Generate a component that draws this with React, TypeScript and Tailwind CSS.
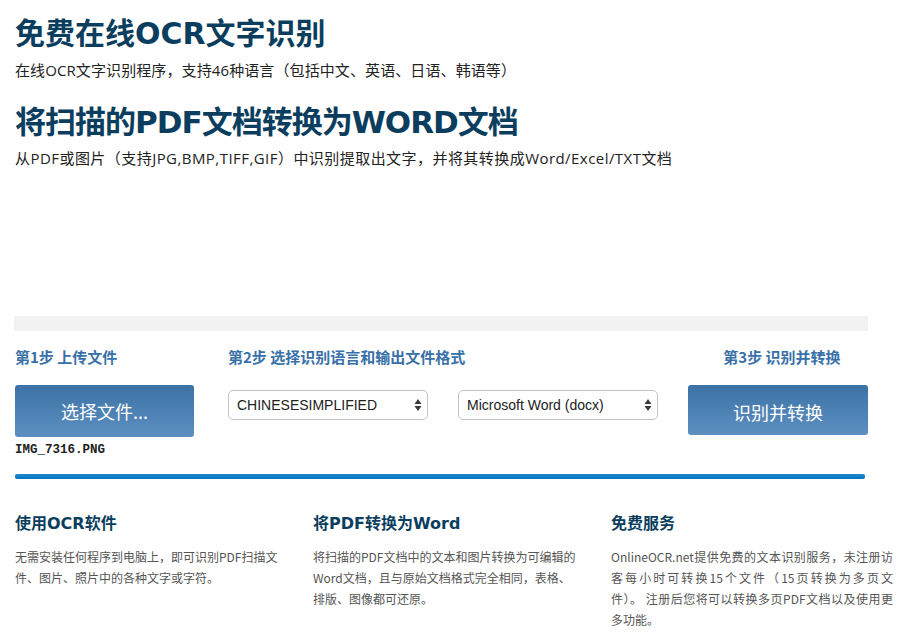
import React from "react";

const titleFont = { fontFamily: '"DejaVu Sans", "Noto Sans CJK SC", sans-serif' };

function UpDown() {
  return (
    <svg width="8" height="14" viewBox="0 0 8 14" className="shrink-0">
      <path d="M4 1 L7.5 6 L0.5 6 Z" fill="#3a3a3a" />
      <path d="M4 13 L7.5 8 L0.5 8 Z" fill="#3a3a3a" />
    </svg>
  );
}

function FakeSelect({ label }: { label: string }) {
  return (
    <div className="w-[200px] h-[30px] mt-[5px] rounded-[5px] border border-[#c4c4c4] bg-white flex items-center justify-between pl-[8px] pr-[5px] text-[14px] text-[#222] font-['Liberation_Sans',sans-serif]">
      <span>{label}</span>
      <UpDown />
    </div>
  );
}

const line = "block [text-align-last:justify]";

export default function App() {
  return (
    <div className="w-[910px] min-h-[643px] bg-white font-['Open_Sans','Noto_Sans_CJK_SC',sans-serif]">
      <div className="pl-[15px] pr-[42px] pt-[16px]">
        <h1 style={titleFont} className="text-[30px] leading-[36px] font-bold text-[#0b3e5e]">
          免费在线OCR文字识别
        </h1>
        <p className="mt-[8px] text-[15px] leading-[20px] text-[#222] tracking-[0.1px]">
          在线OCR文字识别程序，支持46种语言（包括中文、英语、日语、韩语等）
        </p>
        <h2 style={titleFont} className="mt-[22px] text-[31px] leading-[40px] font-bold text-[#0b3e5e] tracking-[-1px]">
          将扫描的PDF文档转换为WORD文档
        </h2>
        <p className="mt-[6px] text-[15px] leading-[20px] text-[#222] tracking-[0.45px]">
          从PDF或图片（支持JPG,BMP,TIFF,GIF）中识别提取出文字，并将其转换成Word/Excel/TXT文档
        </p>

        <div className="h-[148px]" />

        <div className="-ml-px w-[854px] h-[15px] bg-[#f2f2f2]" />

        <div className="mt-[16px] flex items-start">
          <div className="w-[180px]">
            <div className="text-[15px] leading-[20px] font-bold text-[#3870a8] font-['Noto_Sans_CJK_SC',sans-serif]">
              第1步 上传文件
            </div>
            <button className="mt-[18px] w-[179px] h-[52px] rounded-[3px] bg-gradient-to-b from-[#3c72a6] to-[#5d90c1] text-white text-[18px] font-['Noto_Sans_CJK_SC',sans-serif] flex items-center justify-center">
              选择文件...
            </button>
            <div className="mt-[5px] text-[12.5px] leading-[16px] font-bold text-[#222] font-['Liberation_Mono',monospace]">
              IMG_7316.PNG
            </div>
          </div>

          <div className="ml-[33px] w-[430px]">
            <div className="text-[15px] leading-[20px] font-bold text-[#3870a8] font-['Noto_Sans_CJK_SC',sans-serif]">
              第2步 选择识别语言和输出文件格式
            </div>
            <div className="mt-[18px] flex gap-[30px]">
              <FakeSelect label="CHINESESIMPLIFIED" />
              <FakeSelect label="Microsoft Word (docx)" />
            </div>
          </div>

          <div className="ml-[30px] w-[180px]">
            <div className="pl-[8px] text-center text-[15px] leading-[20px] font-bold text-[#3870a8] font-['Noto_Sans_CJK_SC',sans-serif]">
              第3步 识别并转换
            </div>
            <button className="mt-[18px] w-[180px] h-[50px] rounded-[3px] bg-gradient-to-b from-[#3c72a6] to-[#5d90c1] text-white text-[18px] pt-[4px] font-['Noto_Sans_CJK_SC',sans-serif] flex items-center justify-center">
              识别并转换
            </button>
          </div>
        </div>

        <div className="mt-[16px] w-[850px] h-[5px] rounded-[2px] bg-gradient-to-b from-[#1a8ad0] to-[#0674b8]" />

        <div className="mt-[34px] grid grid-cols-[268px_268px_282px] gap-x-[30px] font-['Noto_Sans_CJK_SC',sans-serif]">
          <div>
            <h3 style={titleFont} className="text-[16px] leading-[22px] font-bold text-[#0b3e5e]">使用OCR软件</h3>
            <p className="mt-[11px] text-[12px] leading-[21px] text-[#555]">
              无需安装任何程序到电脑上，即可识别PDF扫描文件、图片、照片中的各种文字或字符。
            </p>
          </div>
          <div>
            <h3 style={titleFont} className="text-[16px] leading-[22px] font-bold text-[#0b3e5e]">将PDF转换为Word</h3>
            <p className="mt-[11px] text-[12px] leading-[21px] text-[#555]">
              将扫描的PDF文档中的文本和图片转换为可编辑的Word文档，且与原始文档格式完全相同，表格、排版、图像都可还原。
            </p>
          </div>
          <div>
            <h3 style={titleFont} className="text-[16px] leading-[22px] font-bold text-[#0b3e5e]">免费服务</h3>
            <p className="mt-[11px] text-[12px] leading-[21px] text-[#555] text-justify">
              <span className={line}>OnlineOCR.net提供免费的文本识别服务，未注册访</span>
              <span className={line}>客每小时可转换15个文件（15页转换为多页文</span>
              <span className={line}>件）。 注册后您将可以转换多页PDF文档以及使用更</span>
              <span className="block">多功能。</span>
            </p>
          </div>
        </div>
      </div>
    </div>
  );
}
